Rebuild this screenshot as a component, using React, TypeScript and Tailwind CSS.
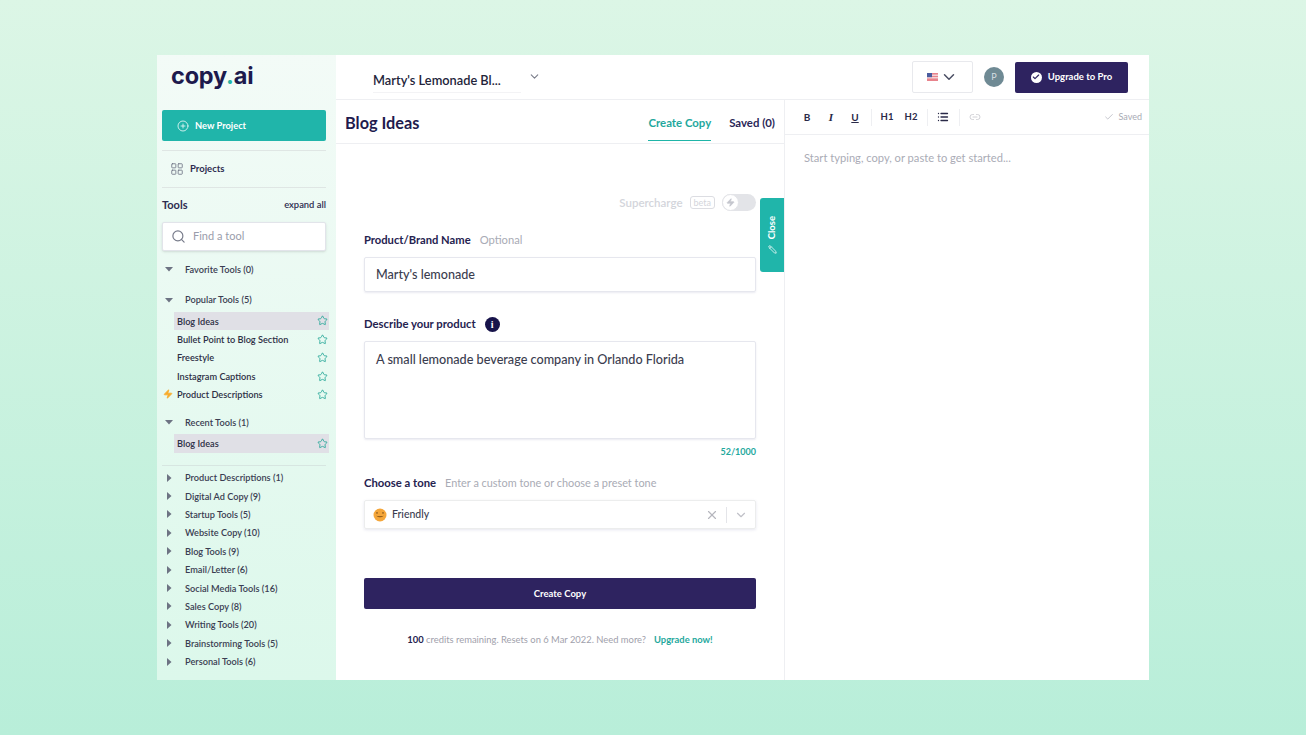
import { Check, ChevronDown, Link2, List, PlusCircle, Search, Star, X, Zap, LayoutGrid, Pencil } from 'lucide-react';

const popularTools = ['Blog Ideas', 'Bullet Point to Blog Section', 'Freestyle', 'Instagram Captions', 'Product Descriptions'];

const toolGroups = [
  'Product Descriptions (1)',
  'Digital Ad Copy (9)',
  'Startup Tools (5)',
  'Website Copy (10)',
  'Blog Tools (9)',
  'Email/Letter (6)',
  'Social Media Tools (16)',
  'Sales Copy (8)',
  'Writing Tools (20)',
  'Brainstorming Tools (5)',
  'Personal Tools (6)',
];

function Caret({ open }: { open?: boolean }) {
  return (
    <svg width="8" height="8" viewBox="0 0 8 8" className="shrink-0 text-[#6d7383]">
      {open ? <path d="M0 2h8L4 6.5z" fill="currentColor" /> : <path d="M2 0v8l4.5-4z" fill="currentColor" />}
    </svg>
  );
}

function GroupRow({ label, open }: { label: string; open?: boolean }) {
  return (
    <div className="flex h-[18.4px] items-center pl-[3px] text-[9.2px] font-semibold text-[#3a3d52]">
      <Caret open={open} />
      <span className="ml-[12px] pt-[1px]">{label}</span>
    </div>
  );
}

function ToolRow({ label, active, bolt }: { label: string; active?: boolean; bolt?: boolean }) {
  return (
    <div
      className={`relative ml-[12px] mr-[-3px] flex h-[18.4px] items-center justify-between pl-[3px] pr-[1px] text-[9.2px] font-semibold text-[#2d2f45] ${
        active ? 'bg-[#e0e0e6]' : ''
      }`}
    >
      {bolt && <Zap size={10} className="absolute left-[-11px] top-[4px] fill-[#f8ab2a] text-[#f8ab2a]" />}
      <span className="pt-[1px]">{label}</span>
      <Star size={11} strokeWidth={1.9} className="text-[#2aa99a]" />
    </div>
  );
}

function Sidebar() {
  return (
    <aside className="flex h-full w-[179px] shrink-0 flex-col bg-gradient-to-b from-[#f3fbf7] to-[#dcf8eb] px-[5px]">
      <div className="ml-[9px] mt-[4px] h-[51px] text-[23.5px] font-bold leading-[34px] tracking-[-0.2px] text-[#1d1a4d] font-['Inter',sans-serif]">
        copy<span className="text-[#25b5a7]">.</span>ai
      </div>
      <button className="flex h-[31px] w-[164px] items-center rounded-[2px] bg-[#20b5aa] pl-[15px] text-[9.3px] font-bold text-white">
        <PlusCircle size={12} strokeWidth={1.5} className="mr-[6px]" />
        New Project
      </button>
      <div className="mt-[9px] h-px w-[164px] bg-[#dfe6e4]" />
      <div className="flex h-[36px] items-center gap-[6px] pl-[8px] text-[9.5px] font-bold text-[#2d2c50]">
        <LayoutGrid size={14} strokeWidth={1.4} className="text-[#6b7082]" />
        Projects
      </div>
      <div className="h-px w-[164px] bg-[#dfe6e4]" />
      <div className="mt-[9px] flex h-[17px] w-[164px] items-center justify-between">
        <span className="text-[11px] font-bold text-[#2d2c50]">Tools</span>
        <span className="text-[9.4px] font-semibold text-[#2d2c50]">expand all</span>
      </div>
      <div className="mt-[8px] flex h-[29px] w-[164px] items-center rounded-[2px] border border-[#e2e4ea] bg-white pl-[8px] text-[11px] text-[#9a9dab] shadow-sm">
        <Search size={15} strokeWidth={1.9} className="mr-[7px] text-[#777b8a]" />
        Find a tool
      </div>
      <div className="mt-[9px] w-[164px]">
        <GroupRow label="Favorite Tools (0)" open />
        <div className="mt-[12px]">
          <GroupRow label="Popular Tools (5)" open />
        </div>
        <div className="mt-[3px]">
          {popularTools.map((tool, i) => (
            <ToolRow key={tool} label={tool} active={i === 0} bolt={i === 4} />
          ))}
        </div>
        <div className="mt-[9px]">
          <GroupRow label="Recent Tools (1)" open />
        </div>
        <div className="mt-[3px]">
          <ToolRow label="Blog Ideas" active />
        </div>
        <div className="mb-[3px] mt-[12px] h-px bg-[#d7e6e1]" />
        {toolGroups.map((group) => (
          <GroupRow key={group} label={group} />
        ))}
      </div>
    </aside>
  );
}

function TopBar() {
  return (
    <header className="flex h-[45px] shrink-0 items-center border-b border-[#eeeff2] pl-[37px] pr-[21px]">
      <div className="mt-[11px] w-[148px] border-b border-[#f3f3f5] pb-[4px] text-[12.8px] font-semibold leading-[15px] text-[#23243a]">
        Marty's Lemonade Bl...
      </div>
      <ChevronDown size={13} strokeWidth={2} className="mb-[2px] ml-[7px] text-[#7a7d8a]" />
      <div className="ml-auto flex h-[32px] w-[61px] items-center justify-center gap-[2px] rounded-[2px] border border-[#e8e9ed]">
        <svg width="11" height="8" viewBox="0 0 11 8">
          <rect width="11" height="8" fill="#e8838c" />
          <rect y="1.6" width="11" height="1.2" fill="#f5e6e8" />
          <rect y="4.2" width="11" height="1.2" fill="#f5e6e8" />
          <rect width="5" height="4.2" fill="#4a5c9e" />
        </svg>
        <ChevronDown size={18} strokeWidth={2} className="text-[#4a4e63]" />
      </div>
      <div className="ml-[11px] flex h-[20px] w-[20px] items-center justify-center rounded-full bg-[#6f8a94] text-[9px] text-[#d5dfe2]">
        P
      </div>
      <button className="ml-[11px] flex h-[31px] w-[113px] items-center justify-center gap-[6px] rounded-[2px] bg-[#2e2360] text-[9.5px] font-bold text-white">
        <span className="flex h-[11px] w-[11px] items-center justify-center rounded-full bg-white">
          <Check size={8} strokeWidth={3.5} className="text-[#2e2360]" />
        </span>
        Upgrade to Pro
      </button>
    </header>
  );
}

function FormPanel() {
  return (
    <section className="relative flex w-[449px] shrink-0 flex-col border-r border-[#eeeff2]">
      <div className="flex h-[44px] items-center justify-between border-b border-[#eeeff2] pl-[9px] pr-[9px]">
        <h1 className="pt-[3px] text-[16.3px] font-bold text-[#1f1b4e]">Blog Ideas</h1>
        <div className="flex h-full items-center gap-[18px] text-[11.4px] font-bold">
          <div className="relative flex h-full items-center pt-[3px] text-[#1fa89d]">
            Create Copy
            <div className="absolute bottom-[2px] left-0 right-0 h-[1.5px] bg-[#1fb5a8]" />
          </div>
          <span className="pt-[3px] text-[#2b2757]">Saved (0)</span>
        </div>
      </div>

      <div className="flex flex-col pl-[28px] pr-[28px]">
        <div className="mt-[49px] flex h-[19px] items-center justify-end text-[11.5px] font-semibold text-[#d3d5db]">
          Supercharge
          <span className="ml-[7px] rounded-[3px] border border-[#dcdde2] px-[3px] text-[9px] font-normal leading-[11px]">beta</span>
          <span className="relative ml-[7px] h-[17px] w-[34px] rounded-full bg-[#e3e4e8]">
            <span className="absolute left-0 top-0 flex h-[17px] w-[17px] items-center justify-center rounded-full border border-[#e3e4e8] bg-white">
              <Zap size={9} className="fill-[#c4c6cd] text-[#c4c6cd]" />
            </span>
          </span>
        </div>

        <div className="mt-[20px] flex h-[17px] items-center gap-[9px] text-[11.2px]">
          <span className="font-bold text-[#25224f]">Product/Brand Name</span>
          <span className="text-[#a9abb5]">Optional</span>
        </div>
        <div className="mt-[8px] flex h-[35px] items-center rounded-[2px] border border-[#e6e7ee] pl-[11px] pt-[2px] text-[12.6px] font-medium text-[#3b3d4f] shadow-[0_1px_2px_rgba(80,80,140,0.12)]">
          Marty's lemonade
        </div>

        <div className="mt-[24px] flex h-[17px] items-center gap-[9px] text-[11.3px] font-bold text-[#25224f]">
          Describe your product
          <span className="flex h-[15px] w-[15px] items-center justify-center rounded-full bg-[#17134a] font-['Liberation_Serif',serif] text-[10px] font-bold text-white">
            i
          </span>
        </div>
        <div className="mt-[8px] h-[98px] rounded-[2px] border border-[#e6e7ee] pl-[11px] pt-[9px] text-[12.65px] font-medium text-[#3b3d4f] shadow-[0_1px_2px_rgba(80,80,140,0.12)]">
          A small lemonade beverage company in Orlando Florida
        </div>
        <div className="mt-[6px] text-right text-[9px] font-bold leading-[13px] text-[#1fa89d]">52/1000</div>

        <div className="mt-[17px] flex h-[17px] items-center gap-[9px]">
          <span className="text-[11.3px] font-bold text-[#25224f]">Choose a tone</span>
          <span className="text-[10.9px] text-[#a9abb5]">Enter a custom tone or choose a preset tone</span>
        </div>
        <div className="mt-[8px] flex h-[29px] items-center rounded-[2px] border border-[#eceded] pl-[8px] pr-[7px] text-[10.5px] font-medium text-[#3b3d4f] shadow-[0_1px_3px_rgba(80,80,140,0.14)]">
          <svg width="14" height="14" viewBox="0 0 14 14" className="mr-[5px]">
            <circle cx="7" cy="7" r="6.5" fill="#f4a63a" />
            <path d="M3 5.2q1-1 2 0M9 5.2q1-1 2 0" stroke="#7a4a12" strokeWidth="0.9" fill="none" />
            <path d="M3.2 7.8q3.8 3 7.6 0q-3.8 1-7.6 0z" fill="#7a4a12" />
          </svg>
          <span className="pt-[1px]">Friendly</span>
          <X size={14} strokeWidth={2} className="ml-auto text-[#b5b6bd]" />
          <span className="mx-[7px] h-[16px] w-px bg-[#e4e5e9]" />
          <ChevronDown size={14} strokeWidth={2} className="text-[#c0c1c8]" />
        </div>

        <button className="mt-[49px] h-[31px] rounded-[2px] bg-[#2e2360] pt-[1px] text-[9.5px] font-bold text-white">Create Copy</button>
        <div className="mt-[24px] text-center text-[9.4px] text-[#9fa1ac]">
          <span className="font-bold text-[#25224f]">100</span> credits remaining. Resets on 6 Mar 2022. Need more?
          <span className="ml-[8px] font-bold text-[#1fa89d]">Upgrade now!</span>
        </div>
      </div>

      <div className="absolute right-0 top-[98px] flex h-[74px] w-[24px] flex-col items-center justify-center gap-[6px] rounded-l-[3px] bg-[#20b5aa] text-white">
        <span className="text-[9.5px] font-bold [writing-mode:vertical-rl] rotate-180">Close</span>
        <Pencil size={9} strokeWidth={2} className="-rotate-90" />
      </div>
    </section>
  );
}

function ToolButton({ children }: { children: React.ReactNode }) {
  return <span className="flex w-[24px] shrink-0 items-center justify-center text-[10px] font-bold">{children}</span>;
}

function EditorPanel() {
  const sep = 'ml-[4px] mr-[3px] h-[17px] w-px bg-[#eeeff2]';
  return (
    <section className="flex min-w-0 flex-1 flex-col">
      <div className="flex h-[35px] items-center border-b border-[#eeeff2] pl-[10px] pr-[7px] text-[#2a2a48]">
        <ToolButton>B</ToolButton>
        <ToolButton>
          <span className="font-['Liberation_Serif',serif] text-[11px] italic">I</span>
        </ToolButton>
        <ToolButton>
          <span className="underline">U</span>
        </ToolButton>
        <span className={sep} />
        <ToolButton>
          <span className="text-[9.5px]">H1</span>
        </ToolButton>
        <ToolButton>
          <span className="text-[9.5px]">H2</span>
        </ToolButton>
        <span className={sep} />
        <ToolButton>
          <List size={12} strokeWidth={2.6} />
        </ToolButton>
        <span className={sep} />
        <ToolButton>
          <Link2 size={12} strokeWidth={1.6} className="text-[#c6c7cd]" />
        </ToolButton>
        <span className="ml-auto flex items-center gap-[4px] text-[9px] text-[#a9abb5]">
          <Check size={10} strokeWidth={1.6} />
          Saved
        </span>
      </div>
      <p className="pl-[19px] pt-[15px] text-[11.15px] text-[#aaacb6]">Start typing, copy, or paste to get started...</p>
    </section>
  );
}

export default function App() {
  return (
    <div className="h-[735px] overflow-hidden bg-gradient-to-b from-[#dcf6e6] to-[#b8eed9] pt-[55px] font-['Lato',sans-serif]">
      <div className="mx-auto flex h-[625px] w-[992px] bg-white">
        <Sidebar />
        <main className="flex min-w-0 flex-1 flex-col">
          <TopBar />
          <div className="flex flex-1">
            <FormPanel />
            <EditorPanel />
          </div>
        </main>
      </div>
    </div>
  );
}
